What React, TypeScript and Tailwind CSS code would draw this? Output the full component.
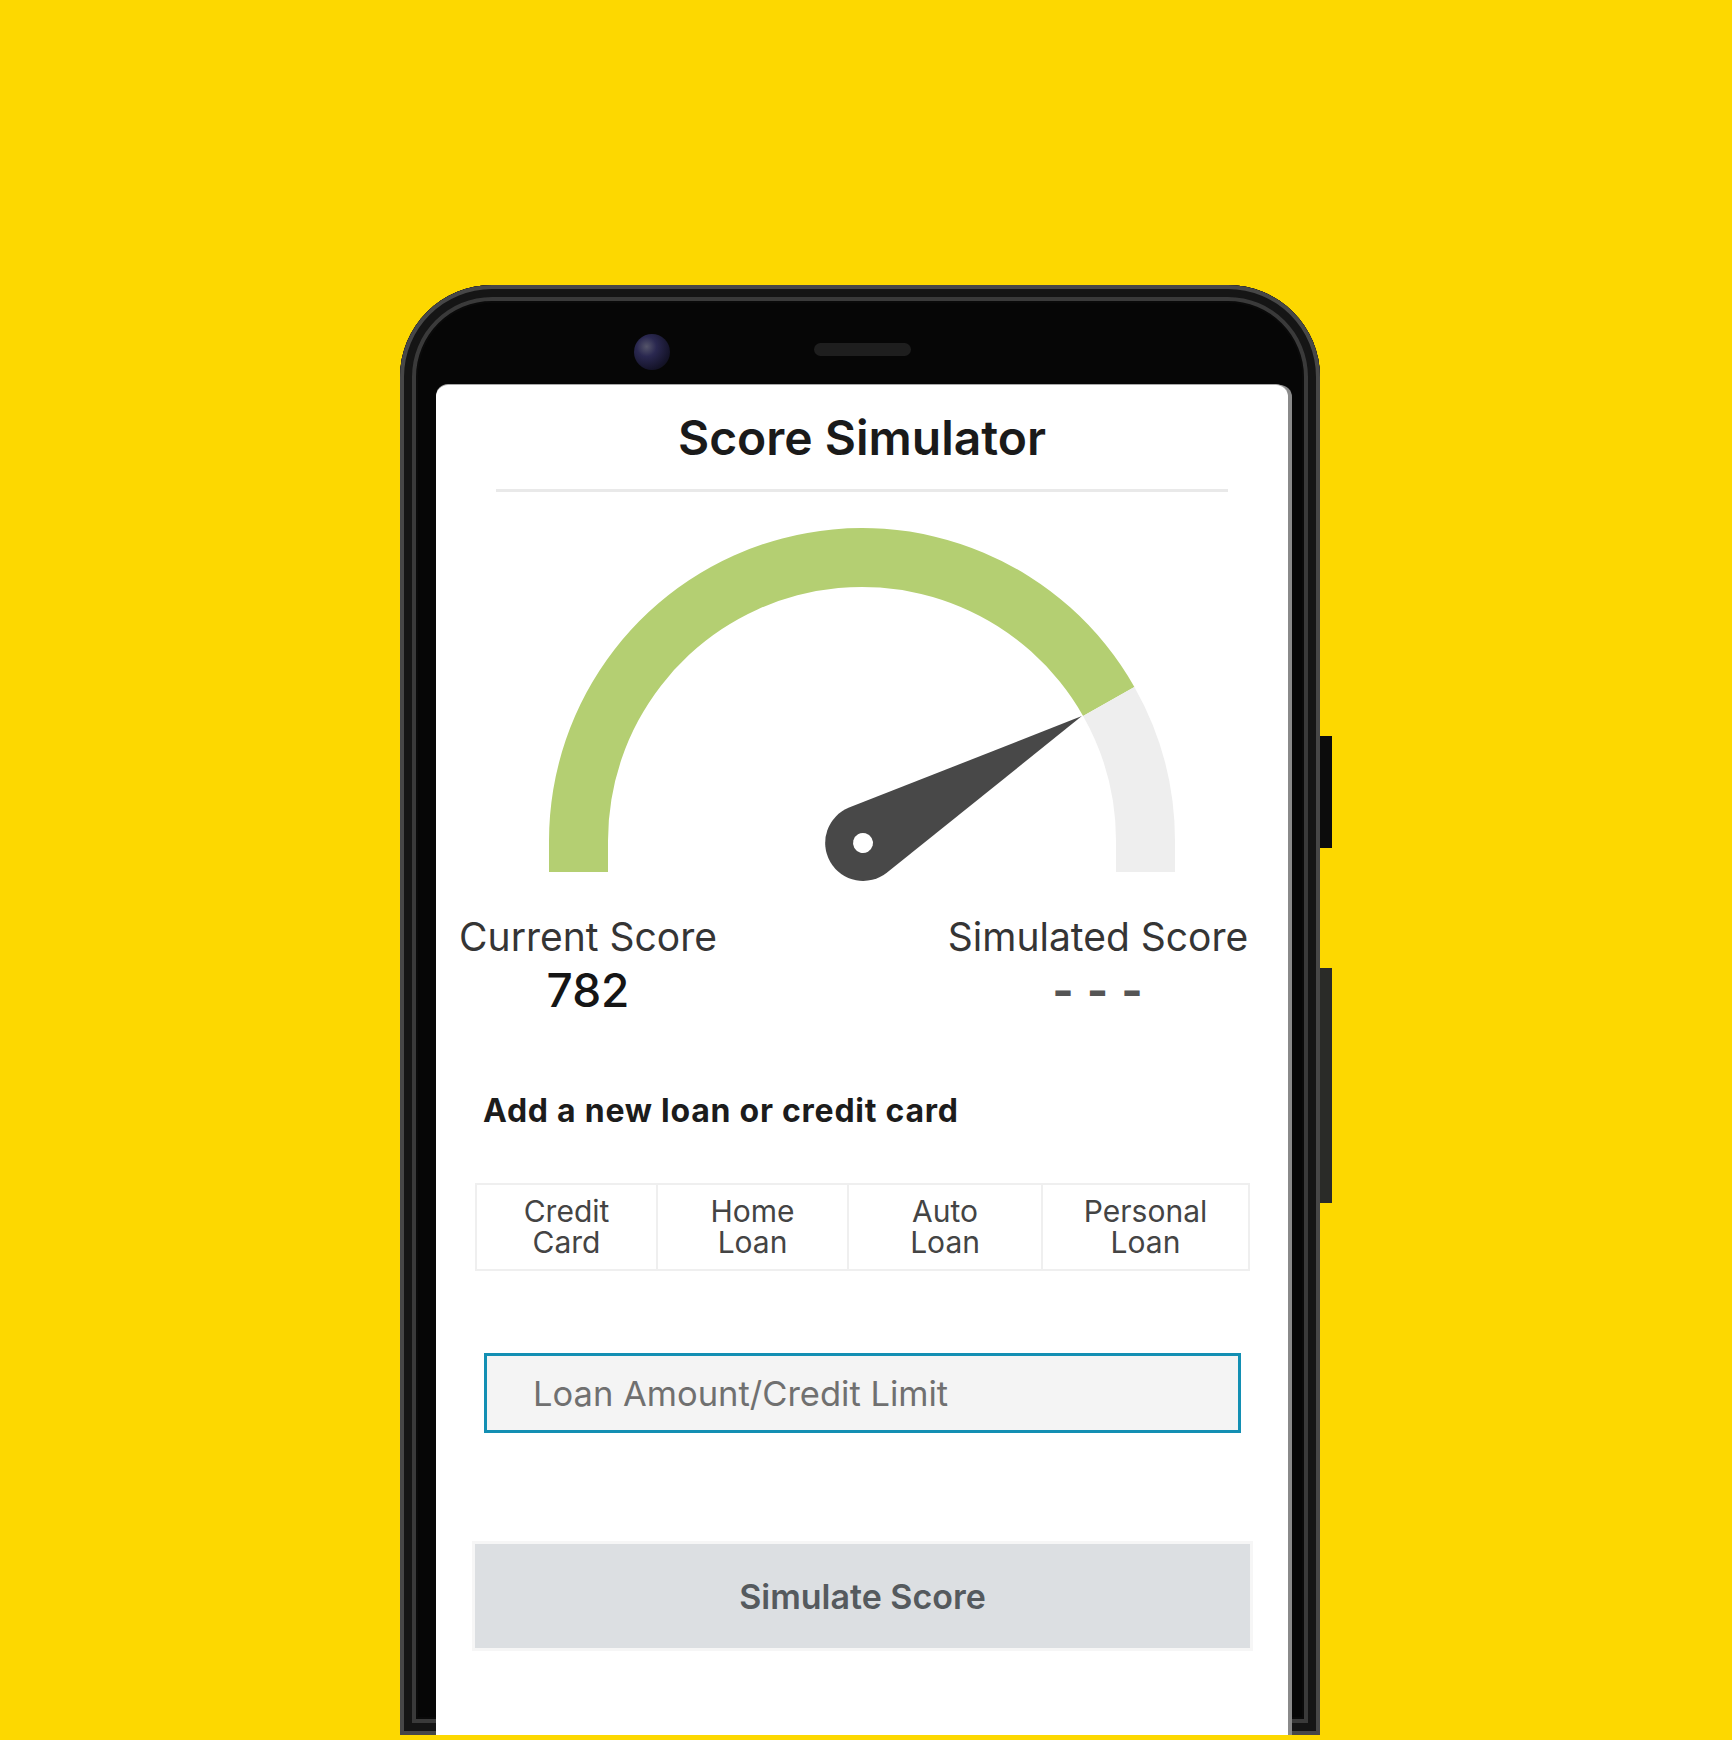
import React from "react";

const tabs = [
  ["Credit", "Card"],
  ["Home", "Loan"],
  ["Auto", "Loan"],
  ["Personal", "Loan"],
];

const Gauge: React.FC = () => (
  <svg width="660" height="365" viewBox="0 0 660 365">
    {/* filled part */}
    <path
      d="M 17 352 L 17 321 A 313 313 0 0 1 602.4 166.9 L 551.1 195.9 A 254 254 0 0 0 76 321 L 76 352 Z"
      fill="#b4cf72"
    />
    {/* remaining part */}
    <path
      d="M 602.4 166.9 A 313 313 0 0 1 643 321 L 643 352 L 584 352 L 584 321 A 254 254 0 0 0 551.1 195.9 Z"
      fill="#eeeeee"
    />
    {/* needle */}
    <g transform="translate(331 323) rotate(-30.1)">
      <path d="M 5.7 -37.6 L 253 0 L 5.7 37.6 A 38 38 0 1 1 5.7 -37.6 Z" fill="#484848" />
      <circle cx="0" cy="0" r="10" fill="#ffffff" />
    </g>
  </svg>
);

const App: React.FC = () => {
  return (
    <div className="w-full h-[1740px] bg-[#fdd800] overflow-hidden pt-[285px] pl-[400px] font-['Inter',sans-serif]">
      {/* Phone */}
      <div className="relative w-[920px] h-[1450px] flex flex-col rounded-t-[92px] bg-[#060606] shadow-[inset_0_0_0_4px_#474747,inset_0_0_0_12px_#151515,inset_0_0_0_16px_#3a3a3a,inset_0_0_0_18px_#0a0a0a]">
        {/* side buttons */}
        <div className="absolute left-full top-[451px] w-[12px] h-[112px] bg-[#0c0c0c]" />
        <div className="absolute left-full top-[683px] w-[12px] h-[235px] bg-[#2a2b28]" />

        {/* top bezel */}
        <div className="h-[100px] flex flex-row items-start pl-[234px]">
          <div className="mt-[49px] w-[36px] h-[36px] rounded-full bg-[radial-gradient(circle_at_35%_35%,#55556a_0%,#2a2850_30%,#15142a_70%,#0b0b0b_100%)]" />
          <div className="mt-[58px] ml-[144px] w-[97px] h-[13px] rounded-full bg-[#1e1e1e]" />
        </div>

        {/* Screen */}
        <div className="flex-1 ml-[36px] mr-[32px] bg-white rounded-t-[12px] shadow-[0_-1px_0_0_#a8a8a8,4px_0_0_0_#8a8a8a] flex flex-col">
          <h1 className="mt-[29px] text-center text-[48px] leading-[48px] font-semibold text-[#1a1a1a]">
            Score Simulator
          </h1>
          <div className="mt-[27px] mx-[60px] h-[3px] bg-[#e9e9e9]" />

          <div className="mt-[28px] flex justify-center">
            <Gauge />
          </div>

          {/* scores */}
          <div className="mt-[32px] flex flex-row">
            <div className="w-[304px] flex flex-col items-center">
              <span className="text-[39px] leading-[40px] text-[#353535]">Current Score</span>
              <span className="mt-[10px] text-[46px] leading-[46px] font-medium text-[#151515]">782</span>
            </div>
            <div className="ml-[188px] w-[340px] flex flex-col items-center">
              <span className="text-[39px] leading-[40px] text-[#353535]">Simulated Score</span>
              <span className="mt-[10px] text-[46px] leading-[46px] font-bold text-[#555555] tracking-[1px]">
                - - -
              </span>
            </div>
          </div>

          <p className="mt-[82px] pl-[47px] text-[32px] leading-[32px] font-bold tracking-[0.75px] text-[#1c1c1c]">
            Add a new loan or credit card
          </p>

          {/* loan type tabs */}
          <div className="mt-[56px] ml-[39px] mr-[38px] h-[88px] grid grid-cols-[182fr_192fr_195fr_206fr] border-2 border-[#efefef] divide-x-2 divide-[#efefef]">
            {tabs.map(([a, b]) => (
              <div key={a + b} className="flex items-center justify-center">
                <p className="text-center text-[30px] leading-[31px] text-[#444444]">
                  {a}
                  <br />
                  {b}
                </p>
              </div>
            ))}
          </div>

          <input
            type="text"
            placeholder="Loan Amount/Credit Limit"
            className="mt-[82px] ml-[48px] mr-[47px] h-[80px] border-[3px] border-[#138fb3] bg-[#f4f4f4] pl-[46px] text-[34.5px] text-[#333] placeholder:text-[#707070] outline-none"
          />

          <button className="mt-[111px] ml-[39px] mr-[38px] h-[104px] bg-[#dcdfe2] shadow-[0_0_0_3px_#f6f6f6] text-[34px] font-semibold text-[#555a5e]">
            Simulate Score
          </button>
        </div>
      </div>
    </div>
  );
};

export default App;
